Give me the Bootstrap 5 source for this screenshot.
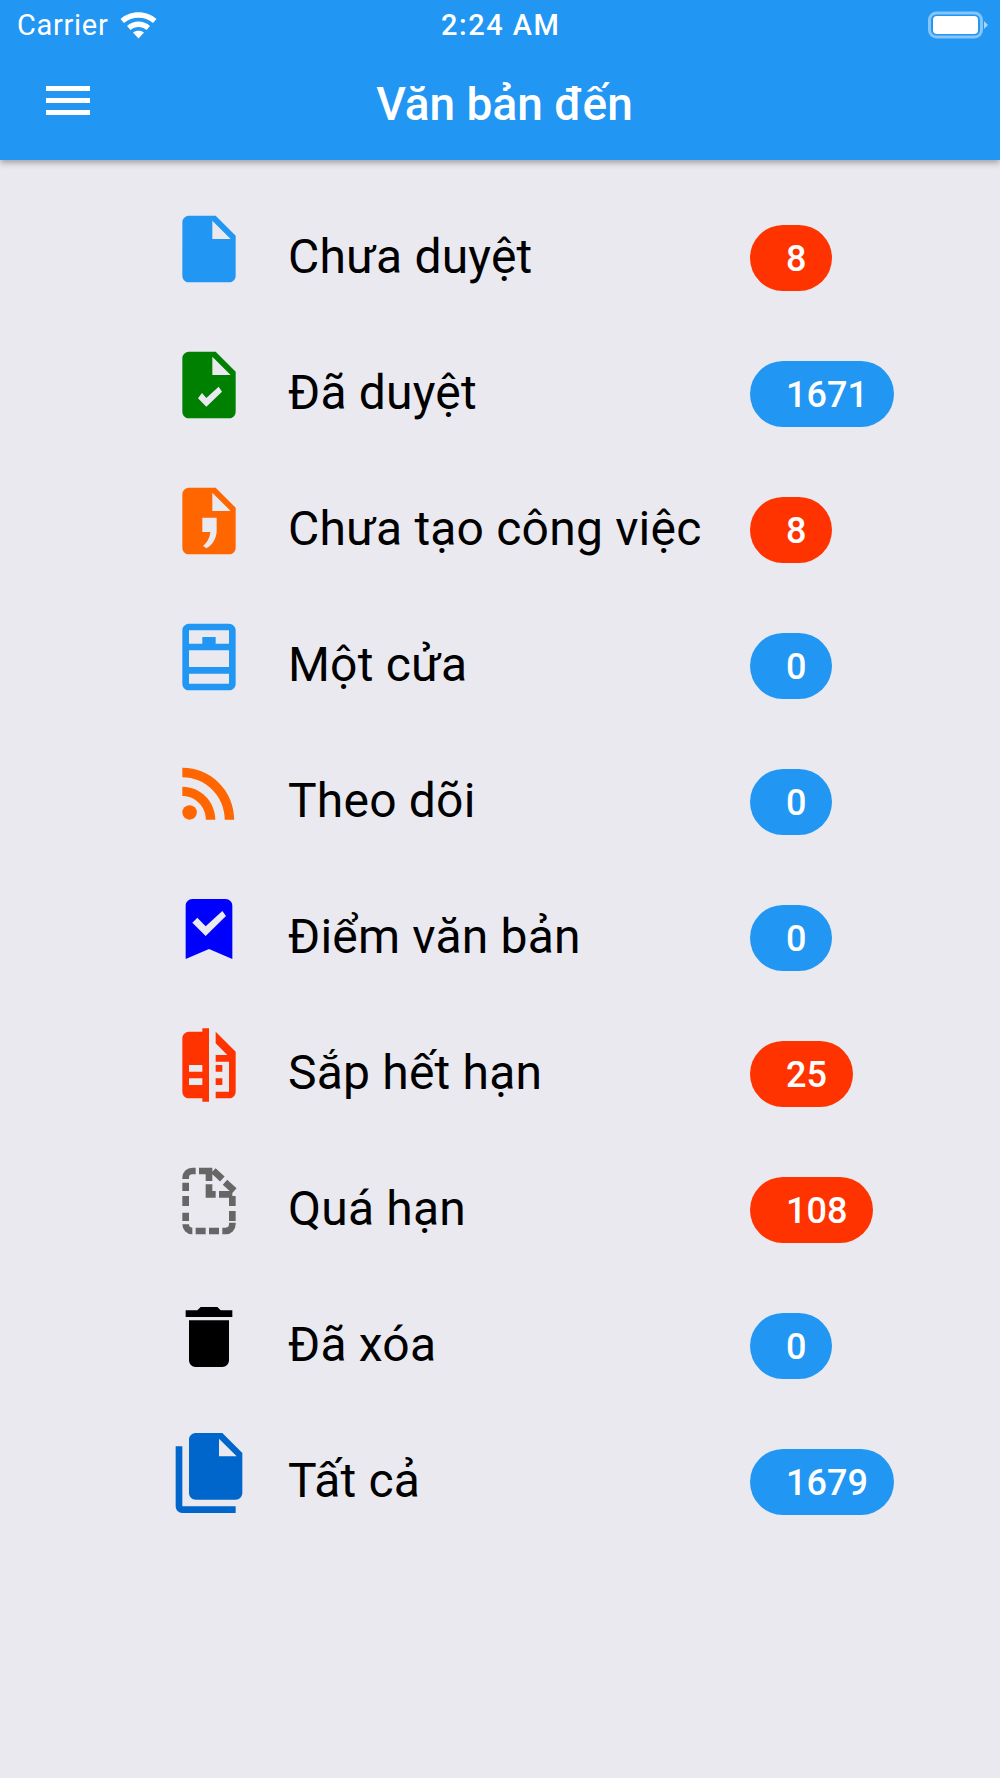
<!DOCTYPE html>
<html lang="vi">
<head>
<meta charset="utf-8">
<title>Văn bản đến</title>
<link href="https://cdn.jsdelivr.net/npm/bootstrap@5.3.0/dist/css/bootstrap.min.css" rel="stylesheet">
<style>
html,body{height:100%}
body{background:#E9E9EF;font-family:Roboto,"Liberation Sans",sans-serif;color:#000}
.app-head{background:#2196F3;height:160px;box-shadow:0 3px 6px rgba(0,0,0,.3);color:#fff;position:relative}
.status-bar{height:50px;padding:0 12px 0 17px;font-size:29px;line-height:1}
.status-carrier{letter-spacing:.7px}
.status-wifi{margin-left:12px}
.status-time{flex:1 1 0;text-align:center;margin-left:-84px;letter-spacing:1.5px;font-weight:500}
.head-title{font-size:46px;font-weight:500;line-height:1;height:110px;padding:0 0 0 46px}
.head-title span{flex:1 1 0;text-align:center;padding-right:81px;margin-bottom:2px}
.burger{width:44px;display:flex;flex-direction:column;gap:7px;margin-bottom:9px}
.burger i{display:block;height:5px;background:#fff}
.menu-list{padding:30px 0 0 169px}
.menu-row{height:136px}
.menu-ico{width:80px;height:80px;margin-top:-18px;flex:none}
.menu-name{width:462px;margin-left:39px;margin-top:-2px;font-size:48px;line-height:1;flex:none;letter-spacing:.2px}
.pill{height:66px;border-radius:33px;padding:0 26px 0 36px;font-size:36px;font-weight:500;color:#fff;line-height:68px}
.pill-blue{background:#2196F3}
.pill-red{background:#FF3300}
</style>
</head>
<body>
<header class="app-head">
  <div class="status-bar d-flex align-items-center">
    <span class="status-carrier">Carrier</span>
    <svg class="status-wifi" width="37" height="28" viewBox="0 0 37 28"><path fill="#fff" d="M.5 8C10-1 27-1 36.500 8L33 12C25 5 12 5 4 12zM7 15c6-6 17-6 23 0l-3.500 4c-4.500-4-11.500-4-16 0zM13 21.500c3-2.500 8-2.500 11 0L18.500 27.500z"/></svg>
    <span class="status-time">2:24 AM</span>
    <svg width="60" height="28" viewBox="0 0 60 28"><rect x="1.500" y="2" width="52" height="24" rx="7" fill="none" stroke="#fff" stroke-opacity=".45" stroke-width="3"/><rect x="5" y="5" width="45" height="18" rx="4" fill="#fff"/><path d="M56 10l4 4-4 4z" fill="#fff" fill-opacity=".6"/></svg>
  </div>
  <div class="head-title d-flex align-items-center">
    <div class="burger"><i></i><i></i><i></i></div>
    <span>Văn bản đến</span>
  </div>
</header>
<main class="menu-list">
  <div class="menu-row d-flex align-items-center">
    <svg class="menu-ico" viewBox="0 0 24 24"><path fill="#2196F3" d="M6 2c-1.100 0-1.990.9-1.990 2L4 20c0 1.100.89 2 1.990 2H18c1.100 0 2-.9 2-2V8l-6-6H6zm7 7V3.500L18.500 9H13z"/></svg>
    <div class="menu-name">Chưa duyệt</div><div class="pill pill-red">8</div>
  </div>
  <div class="menu-row d-flex align-items-center">
    <svg class="menu-ico" viewBox="0 0 24 24"><path fill="#008000" fill-rule="evenodd" d="M6 2c-1.100 0-2 .9-2 2v16c0 1.100.9 2 2 2h12c1.100 0 2-.9 2-2V8l-6-6H6zm7 7V3.500L18.500 9H13zm-1.800 9.500L8.700 16l1.200-1.600 1.300 1.500 3.700-3.400 1 1.500z"/></svg>
    <div class="menu-name">Đã duyệt</div><div class="pill pill-blue">1671</div>
  </div>
  <div class="menu-row d-flex align-items-center">
    <svg class="menu-ico" viewBox="0 0 24 24"><path fill="#FF6600" fill-rule="evenodd" d="M6 2c-1.100 0-2 .9-2 2v16c0 1.100.9 2 2 2h12c1.100 0 2-.9 2-2V8l-6-6H6zm7 7V3.500L18.500 9H13zm-3 2h4.300v4c0 2-1.200 4.200-3.100 5.200l-1-.7c1.200-1 2-2.300 2.200-4.200H10z"/></svg>
    <div class="menu-name">Chưa tạo công việc</div><div class="pill pill-red">8</div>
  </div>
  <div class="menu-row d-flex align-items-center">
    <svg class="menu-ico" viewBox="0 0 24 24"><path fill="#2196F3" fill-rule="evenodd" d="M6 2h12c1.100 0 2 .9 2 2v16c0 1.100-.9 2-2 2H6c-1.100 0-2-.9-2-2V4c0-1.100.9-2 2-2zM6 4v4h4V6h4v2h4V4zm0 6v5h12v-5zm0 7v3h12v-3z"/></svg>
    <div class="menu-name">Một cửa</div><div class="pill pill-blue">0</div>
  </div>
  <div class="menu-row d-flex align-items-center">
    <svg class="menu-ico" viewBox="0 0 24 24"><g fill="#FF6600"><circle cx="6.180" cy="17.820" r="2.180"/><path d="M4 4.440v2.830c7.030 0 12.730 5.700 12.730 12.730h2.830c0-8.590-6.970-15.560-15.560-15.560zm0 5.660v2.830c3.900 0 7.070 3.170 7.070 7.070h2.830c0-5.470-4.430-9.900-9.900-9.900z"/></g></svg>
    <div class="menu-name">Theo dõi</div><div class="pill pill-blue">0</div>
  </div>
  <div class="menu-row d-flex align-items-center">
    <svg class="menu-ico" viewBox="0 0 24 24"><path fill="#0000FF" fill-rule="evenodd" d="M17 3H7c-1.100 0-2 .9-2 2v16l7-3 7 3V5c0-1.100-.9-2-2-2zm-6 11.100l-4-4 1.500-1.500 2.500 2.600 5-4.600 1.100 1.500z"/></svg>
    <div class="menu-name">Điểm văn bản</div><div class="pill pill-blue">0</div>
  </div>
  <div class="menu-row d-flex align-items-center">
    <svg class="menu-ico" viewBox="0 0 24 24"><path fill="#FF3300" fill-rule="evenodd" d="M10 1h2v22h-2v-1H6c-1.100 0-2-.9-2-2V4c0-1.100.9-2 2-2h4zM6 12v2h4v-2zm0 4v2h4v-2zM14 2l6 6v12c0 1.100-.9 2-2 2h-4v-2h4v-9h-4V9h3.500L14 5.500zm0 10h2v2h-2zm0 4h2v2h-2z"/></svg>
    <div class="menu-name">Sắp hết hạn</div><div class="pill pill-red">25</div>
  </div>
  <div class="menu-row d-flex align-items-center">
    <svg class="menu-ico" viewBox="0 0 24 24"><g fill="none" stroke="#666" stroke-width="2"><path d="M5 5.400V5c0-1.100.9-2 2-2h1M5 6.500V9M5 10.500v3M5 15.500V18M5 19c0 1.100.9 2 2 2M8 21h3M12 21h3M16 21h1c1.100 0 2-.9 2-2v-.5M19 18v-3M19 13.500v-3M15 10h4M9 3h3v3M12 7v3h2M13.300 2.900l2.700 2.500M16.800 6.400l2.800 2.500"/></g></svg>
    <div class="menu-name">Quá hạn</div><div class="pill pill-red">108</div>
  </div>
  <div class="menu-row d-flex align-items-center">
    <svg class="menu-ico" viewBox="0 0 24 24"><path fill="#000" d="M6 19c0 1.100.9 2 2 2h8c1.100 0 2-.9 2-2V7H6v12zM19 4h-3.500l-1-1h-5l-1 1H5v2h14V4z"/></svg>
    <div class="menu-name">Đã xóa</div><div class="pill pill-blue">0</div>
  </div>
  <div class="menu-row d-flex align-items-center">
    <svg class="menu-ico" viewBox="0 0 24 24"><path fill="#0066CC" fill-rule="evenodd" d="M8 0h8l6 6v12c0 1.100-.9 2-2 2H8c-1.100 0-2-.9-2-2V2c0-1.100.9-2 2-2zm7 1.700V7h5.300zM2 4h2v18h16v2H4c-1.100 0-2-.9-2-2z"/></svg>
    <div class="menu-name">Tất cả</div><div class="pill pill-blue">1679</div>
  </div>
</main>
<script src="https://cdn.jsdelivr.net/npm/bootstrap@5.3.0/dist/js/bootstrap.bundle.min.js"></script>
</body>
</html>
